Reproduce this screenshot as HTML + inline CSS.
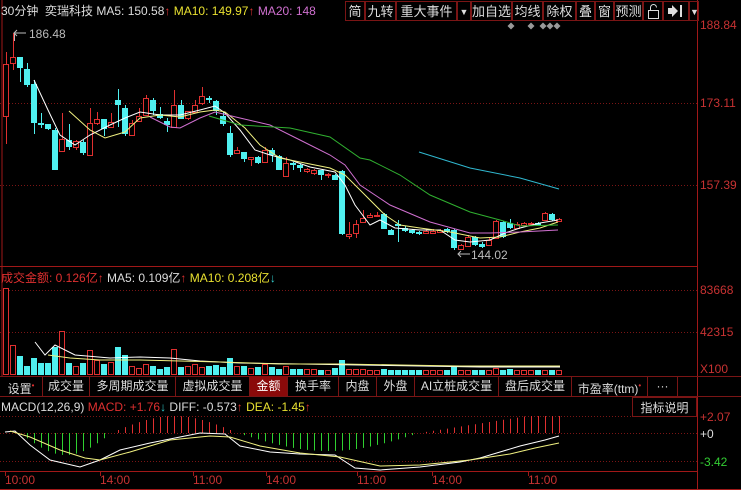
<!DOCTYPE html>
<html><head><meta charset="utf-8"><style>
body{margin:0;background:#000;width:741px;height:490px;overflow:hidden;font-family:"Liberation Sans","Noto Sans CJK SC",sans-serif;}
.t{position:absolute;white-space:nowrap;font-size:12px;line-height:14px}
.btn{position:absolute;top:1px;height:20px;border:1px solid #7a1515;color:#ddd;font-size:13px;line-height:20px;text-align:center;box-sizing:border-box}
.tab{position:absolute;top:376px;height:20px;border-right:1px solid #7a1515;color:#ddd;font-size:12px;line-height:20px;text-align:center;box-sizing:border-box}
.ax{position:absolute;left:700px;color:#c83232;font-size:12px}
</style></head><body>
<svg id="s" width="741" height="490" style="position:absolute;left:0;top:0"></svg>
<div class="t" style="left:1px;top:4px;color:#ddd">30分钟 &nbsp;奕瑞科技 <span>MA5: 150.58</span><span style="color:#e03030">↑</span> <span style="color:#e8e030">MA10: 149.97</span><span style="color:#e03030">↑</span> <span style="color:#d070d0">MA20: 148</span></div>
<div class="btn" style="left:345px;width:20px">简</div>
<div class="btn" style="left:365px;width:31px">九转</div>
<div class="btn" style="left:396px;width:61px">重大事件</div>
<div class="btn" style="left:457px;width:14px;font-size:9px">▼</div>
<div class="btn" style="left:471px;width:41px">加自选</div>
<div class="btn" style="left:512px;width:31px">均线</div>
<div class="btn" style="left:543px;width:33px">除权</div>
<div class="btn" style="left:576px;width:19px">叠</div>
<div class="btn" style="left:595px;width:19px">窗</div>
<div class="btn" style="left:614px;width:29px">预测</div>
<div class="btn" style="left:643px;width:20px"></div>
<div class="btn" style="left:663px;width:26px"></div>
<div class="btn" style="left:689px;width:10px;font-size:9px">▼</div>
<div class="ax" style="top:18px">188.84</div>
<div class="ax" style="top:96px">173.11</div>
<div class="ax" style="top:178px">157.39</div>
<div class="t" style="left:29px;top:27px;color:#bbb">186.48</div>
<div class="t" style="left:471px;top:248px;color:#bbb">144.02</div>
<div class="t" style="left:1px;top:271px;color:#ddd"><span style="color:#e03030">成交金额: 0.126亿↑</span> MA5: 0.109亿<span style="color:#e03030">↑</span> <span style="color:#e8e030">MA10: 0.208亿</span><span style="color:#3cc">↓</span></div>
<div class="ax" style="top:283px">83668</div>
<div class="ax" style="top:325px">42315</div>
<div class="ax" style="top:362px">X100</div>
<div class="tab" style="left:0;width:43px">设置<sup style="color:#e03030;font-size:8px">•</sup></div>
<div class="tab" style="left:43px;width:47px">成交量</div>
<div class="tab" style="left:90px;width:86px">多周期成交量</div>
<div class="tab" style="left:176px;width:74px">虚拟成交量</div>
<div class="tab" style="left:250px;width:38px;background:#8a0a0a;color:#fff">金额</div>
<div class="tab" style="left:288px;width:51px">换手率</div>
<div class="tab" style="left:339px;width:38px">内盘</div>
<div class="tab" style="left:377px;width:38px">外盘</div>
<div class="tab" style="left:415px;width:84px">AI立桩成交量</div>
<div class="tab" style="left:499px;width:73px">盘后成交量</div>
<div class="tab" style="left:572px;width:76px">市盈率(ttm)<sup style="color:#e03030;font-size:8px">•</sup></div>
<div class="tab" style="left:648px;width:30px">···</div>
<div class="t" style="left:1px;top:400px;color:#ddd">MACD(12,26,9) <span style="color:#e03030">MACD: +1.76</span><span style="color:#3cc">↓</span> DIFF: -0.573<span style="color:#e03030">↑</span> <span style="color:#e8e030">DEA: -1.45</span><span style="color:#e03030">↑</span></div>
<div class="t" style="left:632px;top:397px;width:65px;height:20px;border:1px solid #7a1515;color:#ddd;text-align:center;line-height:20px;box-sizing:border-box;font-size:12px">指标说明</div>
<div class="ax" style="top:410px">+2.07</div>
<div class="ax" style="top:427px;color:#ddd">+0</div>
<div class="ax" style="top:455px;color:#3c3">-3.42</div>
<div class="t" style="left:5px;top:473px;color:#c83232">10:00</div>
<div class="t" style="left:100px;top:473px;color:#c83232">14:00</div>
<div class="t" style="left:193px;top:473px;color:#c83232">11:00</div>
<div class="t" style="left:266px;top:473px;color:#c83232">14:00</div>
<div class="t" style="left:357px;top:473px;color:#c83232">11:00</div>
<div class="t" style="left:432px;top:473px;color:#c83232">14:00</div>
<div class="t" style="left:528px;top:473px;color:#c83232">11:00</div>
<script>
var s=document.getElementById('s'),h='';
function L(x1,y1,x2,y2,c,d){h+='<line x1="'+x1+'" y1="'+y1+'" x2="'+x2+'" y2="'+y2+'" stroke="'+c+'" stroke-width="1"'+(d?' stroke-dasharray="1,2"':'')+'/>';}
function R(x,y,w,hh,f,st){h+='<rect x="'+x+'" y="'+y+'" width="'+w+'" height="'+hh+'" fill="'+f+'"'+(st?' stroke="'+st+'"':'')+'/>';}
function P(pts,c){h+='<polyline fill="none" stroke="'+c+'" stroke-width="1" points="'+pts+'"/>';}
L(697.5,0,697.5,490,'#a01818');L(0,266.5,697,266.5,'#a01818');L(0,396.5,741,396.5,'#7a1515');L(0,376.5,741,376.5,'#7a1515');
L(0,471.5,697,471.5,'#a01818');L(0,489.5,741,489.5,'#a01818');L(2,0,2,376,'#a01818');
L(0,103.5,697,103.5,'#7a1515',1);L(0,185.5,697,185.5,'#7a1515',1);L(0,290.5,697,290.5,'#7a1515',1);L(0,332.5,697,332.5,'#7a1515',1);
L(0,416.5,697,416.5,'#7a1515',1);L(0,433.5,697,433.5,'#7a1515',1);L(0,461.5,697,461.5,'#7a1515',1);
[5,100,193,266,357,432,528].forEach(function(x){L(x+.5,471,x+.5,476,'#a01818')});
var C=[['r',64,116,52,144],['r',57,63,33,70],['c',57,68,57,82],['c',69,85,63,87],['c',84,123,80,134],['c',123,125,113,128],['c',124,129,124,130],['c',130,170,128,170],['r',139,151,113,151],['c',140,147,124,150],['r',141,147,140,150],['c',142,153,140,155],['r',123,155,108,155],['r',119,123,112,125],['c',119,129,119,136],['r',122,127,113,128],['c',100,105,89,127],['c',108,134,105,136],['r',123,135,120,135],['r',116,121,108,121],['r',98,115,95,115],['c',100,111,98,115],['c',114,118,107,119],['c',121,125,118,132],['r',105,127,90,127],['c',105,119,100,119],['r',111,118,111,120],['r',105,112,100,112],['r',96,103,87,105],['c',98,100,96,103],['c',101,111,100,115],['c',116,124,112,126],['c',133,155,126,157],['r',150,153,147,154],['c',152,159,152,162],['r',157,159,157,166],['c',157,163,156,164],['r',150,162,147,163],['c',150,155,148,162],['c',156,170,155,170],['r',163,176,157,176],['c',163,165,162,170],['c',165,168,164,172],['r',169,171,168,173],['r',170,173,169,175],['c',170,175,170,180],['r',174,175,173,178],['c',175,180,174,180],['c',171,234,170,235],['r',234,236,222,239],['r',224,233,220,238],['r',218,222,210,222],['r',215,217,213,218],['r',215,216,212,216],['c',214,229,213,229],['c',230,235,229,235],['c',224,226,220,242],['c',228,231,226,232],['c',230,233,229,234],['c',232,234,231,235],['r',231,233,229,234],['r',231,233,229,234],['r',230,232,229,233],['c',229,232,228,233],['c',230,248,229,250],['r',245,249,244,250],['r',237,246,235,247],['c',237,245,236,246],['c',244,247,242,248],['r',240,245,238,246],['r',221,238,220,238],['c',222,237,221,238],['c',223,228,219,229],['r',224,228,222,229],['r',223,225,222,226],['r',223,224,222,225],['c',223,225,222,226],['r',213,220,212,221],['c',214,220,213,221],['r',219,221,218,222]];
var V={0:288,1:345,2:356,3:366,4:358,5:363,6:363,7:347,8:331,9:363,10:366,11:363,12:350,13:360,14:364,15:362,16:347,17:355,18:366,19:368,20:364,21:366,22:369,23:367,24:349,25:367,26:366,27:364,28:367,29:366,30:365,31:367,32:358,33:366,34:366,35:368,36:367,37:364,38:367,39:369,40:366,41:369,42:369,43:369,44:369,45:370,46:370,47:368,48:360,49:369,50:369,51:369,52:370,53:370,54:369,55:370,56:370,57:370,58:370,59:370,60:370,61:370,62:370,63:370,64:367,65:370,66:370,67:370,68:370,69:370,70:368,71:370,72:369,73:370,74:370,75:370,76:370,77:370,78:370,79:370};
C.forEach(function(c,i){var x=6+7*i,col=c[0]=='r'?'#e03030':'#50f0f0';
 L(x+.5,c[3],x+.5,c[4],col);
 if(c[0]=='r')R(x-2.5,c[1]+.5,5,Math.max(c[2]-c[1],1),'#000',col);else R(x-3,c[1],6,Math.max(c[2]-c[1],1),col);
 var vt=V[i]||370; if(c[0]=='r')R(x-2.5,vt+.5,5,374-vt,'#000',col);else R(x-3,vt,6,375-vt,col);
 var m;
 if(i<2)m=0;else if(i<15)m=Math.sin((i-2)/13*Math.PI)*22;else if(i<33)m=-Math.sin((i-15)/18*Math.PI)*17;else if(i<59)m=Math.sin((i-33)/26*Math.PI)*18;else m=-Math.min((i-59)*1.1,17);
 if(Math.abs(m)>1)L(x+.5,433,x+.5,433+m,m>0?'#30d030':'#e03030');
});
P('5,432 15,431 30,445 50,460 80,467 100,460 120,450 150,443 180,437 200,433 225,434 240,446 270,452 300,454 335,455 355,468 380,470 420,467 460,462 480,458 500,452 520,446 545,440 559,436','#fff');
P('10,431 30,437 60,450 85,458 100,460 130,452 170,440 210,436 230,437 260,446 300,453 340,457 380,466 420,465 470,460 510,454 535,448 559,443','#f0f080');
P('34,80 48,110 60,135 75,145 90,135 110,125 125,118 140,112 160,115 180,115 200,110 215,106 225,113 240,130 255,150 270,155 290,160 310,167 335,172 345,185 355,205 370,225 380,220 395,228 420,230 440,230 455,240 470,242 490,240 505,233 520,228 540,223 558,220','#fff');
P('69,111 90,130 105,138 125,132 140,118 160,115 180,117 200,112 215,110 225,112 245,128 260,145 280,158 300,162 330,168 345,175 365,195 385,215 400,225 420,228 450,232 480,238 500,237 520,232 540,228 558,222','#f0f080');
P('150,117 170,127 180,128 200,118 215,112 240,118 270,125 300,140 330,155 345,165 360,185 390,205 430,222 470,233 490,233 520,232 558,230','#d070d0');
P('209,116 240,125 290,128 330,137 360,158 370,160 400,175 430,195 470,212 500,220 520,226 558,225','#30b030');
P('419,152 470,168 520,178 559,189','#30b8d0');
P('35,342 45,355 55,345 75,355 110,358 140,357 170,358 200,361 240,363 300,364 360,365 420,366 480,367 560,367','#fff');
P('48,355 70,358 100,360 140,360 180,361 220,362 280,364 340,364 400,365 460,366 560,366','#f0f080');
h+='<path d="M14,33h12M17,30l-3,3l3,3M14.5,33v8" stroke="#bbb" fill="none"/>';
h+='<path d="M458,254h12M461,251l-3,3l3,3" stroke="#bbb" fill="none"/>';
// lock icon
h+='<rect x="648.5" y="10.5" width="10" height="8" fill="none" stroke="#ddd"/><path d="M650.5,10.5v-3a3,3 0 0 1 6,0" fill="none" stroke="#ddd"/>';
// forward-to-end icon
h+='<path d="M668,8h4v-3l6,6l-6,6v-3h-4z" fill="#ddd"/><rect x="680" y="5" width="2" height="12" fill="#ddd"/>';
[[511,26],[531,26],[543,26],[550,26],[557,26]].forEach(function(p){h+='<path d="M'+p[0]+','+(p[1]-3.5)+'l3.5,3.5l-3.5,3.5l-3.5,-3.5z" fill="#999"/>';});
s.innerHTML=h;
</script>
</body></html>
